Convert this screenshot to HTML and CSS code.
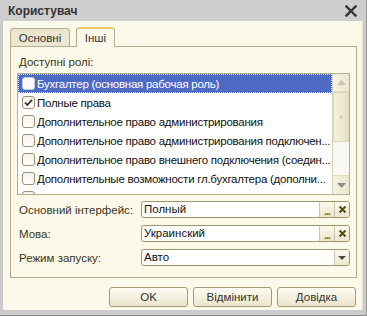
FILE: index.html
```html
<!DOCTYPE html>
<html>
<head>
<meta charset="utf-8">
<link rel="stylesheet" href="styles.css">
</head>
<body>
<div class="window">
  <div class="titlebar">
    <span class="title">Користувач</span>
    <svg class="close" width="12" height="12" viewBox="0 0 12 12"><path d="M1.5 1.5 L10.5 10.5 M10.5 1.5 L1.5 10.5" stroke="#333" stroke-width="2.4" stroke-linecap="square"/></svg>
  </div>
  <div class="client">
    <div class="tabs">
      <div class="tab">Основні</div>
      <div class="tab active">Інші</div>
    </div>
    <div class="panel">
      <div class="label top">Доступні ролі:</div>
      <div class="listbox">
        <div class="rows">
          <div class="row selected"><span class="cb"></span><span class="txt">Бухгалтер (основная рабочая роль)</span></div>
          <div class="row"><span class="cb checked"><svg width="11" height="11" viewBox="0 0 11 11"><path d="M2 5.5 L4.3 8 L9 2.8" fill="none" stroke="#333" stroke-width="1.8"/></svg></span><span class="txt">Полные права</span></div>
          <div class="row"><span class="cb"></span><span class="txt">Дополнительное право администрирования</span></div>
          <div class="row"><span class="cb"></span><span class="txt">Дополнительное право администрирования подключен...</span></div>
          <div class="row"><span class="cb"></span><span class="txt">Дополнительное право внешнего подключения (соедин...</span></div>
          <div class="row"><span class="cb"></span><span class="txt">Дополнительные возможности гл.бухгалтера (дополни...</span></div>
          <div class="row"><span class="cb"></span><span class="txt">Дополнительные права</span></div>
        </div>
        <div class="scrollbar">
          <div class="sb-btn"><svg width="9" height="5" viewBox="0 0 9 5"><path d="M0 5 L4.5 0 L9 5Z" fill="#c9c5b4"/></svg></div>
          <div class="sb-thumb"><span class="grip"></span></div>
          <div class="sb-track"></div>
          <div class="sb-btn"><svg width="9" height="5" viewBox="0 0 9 5"><path d="M0 0 L4.5 5 L9 0Z" fill="#8a8a8a"/></svg></div>
        </div>
      </div>
      <div class="form">
        <div class="frow">
          <span class="label">Основний інтерфейс:</span>
          <div class="field"><span class="val">Полный</span><span class="fbtn dots">...</span><span class="fbtn"><svg width="9" height="9" viewBox="0 0 9 9"><path d="M1.5 1.5 L7.5 7.5 M7.5 1.5 L1.5 7.5" stroke="#5a4a1a" stroke-width="2"/></svg></span></div>
        </div>
        <div class="frow">
          <span class="label">Мова:</span>
          <div class="field"><span class="val">Украинский</span><span class="fbtn dots">...</span><span class="fbtn"><svg width="9" height="9" viewBox="0 0 9 9"><path d="M1.5 1.5 L7.5 7.5 M7.5 1.5 L1.5 7.5" stroke="#5a4a1a" stroke-width="2"/></svg></span></div>
        </div>
        <div class="frow">
          <span class="label">Режим запуску:</span>
          <div class="field"><span class="val">Авто</span><span class="fbtn"><svg width="8" height="4" viewBox="0 0 8 4"><path d="M0 0 L4 4 L8 0Z" fill="#4a4a4a"/></svg></span></div>
        </div>
      </div>
    </div>
    <div class="buttons">
      <div class="btn">OK</div>
      <div class="btn">Відмінити</div>
      <div class="btn">Довідка</div>
    </div>
  </div>
</div>
</body>
</html>
```

FILE: styles.css
```css
* { box-sizing: border-box; }
html, body { margin: 0; padding: 0; }
body {
  width: 367px;
  height: 316px;
  overflow: hidden;
  font-family: "Liberation Sans", Arial, sans-serif;
  font-size: 11.5px;
  color: #1a1a1a;
}
.window {
  width: 367px;
  height: 316px;
  background: #cbcbcb;
  display: flex;
  flex-direction: column;
  border-bottom: 1px solid #8c8c8c;
  border-right: 1px solid #9a9a9a;
}
.titlebar {
  height: 21px;
  flex: none;
  display: flex;
  align-items: center;
  justify-content: space-between;
  padding: 0 9px 0 8px;
  background: #cecece;
}
.title {
  font-weight: bold;
  font-size: 12px;
  color: #333;
}
.close { display: block; }
.client {
  flex: 1;
  margin: 0 3px 5px 3px;
  background: #fbf9ea;
  border-right: 1px solid #e4e0cc;
  display: flex;
  flex-direction: column;
  padding: 6px 5px 0 7px;
}
.tabs {
  display: flex;
  gap: 6px;
  height: 19px;
  align-items: flex-end;
  position: relative;
  z-index: 1;
}
.tab {
  height: 18px;
  border: 1px solid #b5ad8c;
  border-bottom: none;
  border-radius: 4px 4px 0 0;
  background: #ece6d0;
  color: #333;
  display: flex;
  align-items: center;
  width: 60px;
  justify-content: center;
}
.tab.active {
  height: 20px;
  width: 39px;
  background: #fbf9ea;
  border-top: 2px solid #f3c56a;
  margin-bottom: -1px;
}
.panel {
  height: 232px;
  border: 1px solid #b5ad8c;
  padding: 8px 6px 0 6px;
  display: flex;
  flex-direction: column;
}
.label { color: #3b3520; white-space: nowrap; }
.label.top { height: 18px; line-height: 14px; padding-left: 2px; }
.listbox {
  height: 122px;
  border: 1px solid #b5ad8c;
  background: #fff;
  display: flex;
  overflow: hidden;
}
.rows { flex: 1; overflow: hidden; min-width: 0; }
.row {
  height: 19px;
  display: flex;
  align-items: center;
  padding-left: 4px;
  white-space: nowrap;
  color: #111;
  letter-spacing: -0.25px;
}
.row.selected {
  background: #4e6bc4;
  color: #fff;
  outline: 1px dotted #e0e6ff;
  outline-offset: -1px;
}
.cb {
  width: 13px;
  height: 13px;
  flex: none;
  border: 1px solid #9c9270;
  border-radius: 3px;
  background: linear-gradient(#f4f2ea, #ffffff);
  margin-right: 2px;
  display: flex;
  align-items: center;
  justify-content: center;
}
.row.selected .cb { border-color: #c8cbd8; background: #fafafa; }
.txt { overflow: hidden; }
.scrollbar {
  width: 17px;
  flex: none;
  border-left: 1px solid #d6d0b8;
  display: flex;
  flex-direction: column;
  background: #f7f5ec;
}
.sb-btn {
  height: 18px;
  display: flex;
  align-items: center;
  justify-content: center;
  background: linear-gradient(90deg, #f6f3e4, #ece6cc);
  border-bottom: 1px solid #e2dcc4;
}
.sb-btn:last-child { border-top: 1px solid #e2dcc4; border-bottom: none; height: 19px; }
.sb-thumb {
  height: 50px;
  background: linear-gradient(90deg, #f5f1dd, #e9e2c3);
  border: 1px solid #ddd6b8;
  display: flex;
  align-items: center;
  justify-content: center;
}
.grip { width: 4px; height: 4px; border-radius: 2px; background: #d8d2b8; }
.sb-track { flex: 1; background: #f9f8f2; }
.form {
  display: flex;
  flex-direction: column;
  gap: 7px;
  margin-top: 6px;
}
.frow {
  display: flex;
  align-items: center;
  height: 17px;
}
.frow .label { width: 124px; flex: none; padding-left: 2px; }
.field {
  flex: 1;
  height: 17px;
  border: 1px solid #9e9470;
  border-radius: 3px;
  background: #fff;
  display: flex;
  align-items: stretch;
  overflow: hidden;
}
.val { flex: 1; padding-left: 2px; line-height: 15px; color: #111; }
.fbtn {
  width: 15px;
  display: flex;
  align-items: center;
  justify-content: center;
  background: linear-gradient(#fbf9ef, #ece6cd);
  border-left: 1px solid #cfc7a6;
  color: #8a6a10;
  font-weight: bold;
}
.fbtn.dots { align-items: flex-end; line-height: 11px; font-size: 11px; letter-spacing: -1px; }
.buttons {
  display: flex;
  justify-content: flex-end;
  gap: 5px;
  margin-top: 9px;
  padding-right: 1px;
}
.btn {
  width: 79px;
  height: 20px;
  border: 1px solid #a39a74;
  border-radius: 3px;
  background: linear-gradient(#fdfcf4, #ebe5cb);
  display: flex;
  align-items: center;
  justify-content: center;
  color: #333;
}
```
